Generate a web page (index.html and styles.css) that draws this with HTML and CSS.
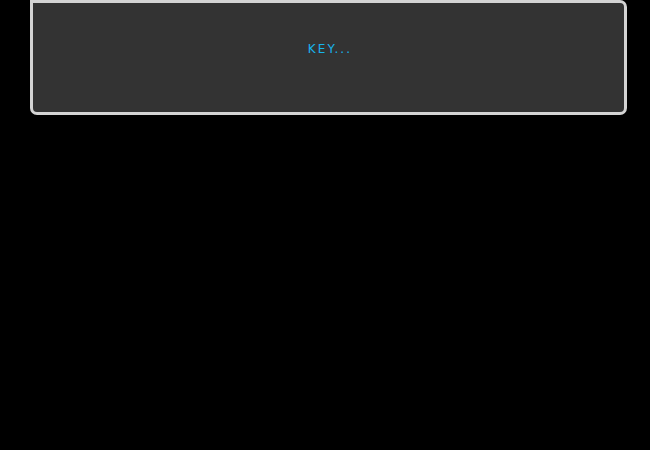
FILE: index.html
```html
<!DOCTYPE html>
<html>
<head>
<meta charset="utf-8">
<link rel="stylesheet" href="styles.css">
</head>
<body>
<div class="panel">
  <div class="label">KEY...</div>
</div>
</body>
</html>
```
FILE: styles.css
```css
html, body {
  margin: 0;
  padding: 0;
  background: #000;
  width: 650px;
  height: 450px;
  overflow: hidden;
}
.panel {
  margin-left: 30px;
  width: 591px;
  background: #333333;
  border: 3px solid #d4d4d4;
  border-radius: 0 7px 7px 7px;
  display: flex;
  justify-content: center;
  padding-top: 38px;
  box-sizing: content-box;
  height: 71px;
}
.label {
  font-family: "DejaVu Sans", sans-serif;
  font-size: 12px;
  letter-spacing: 2.1px;
  padding-left: 3px;
  color: #18b4ec;
  line-height: 16px;
}
```
